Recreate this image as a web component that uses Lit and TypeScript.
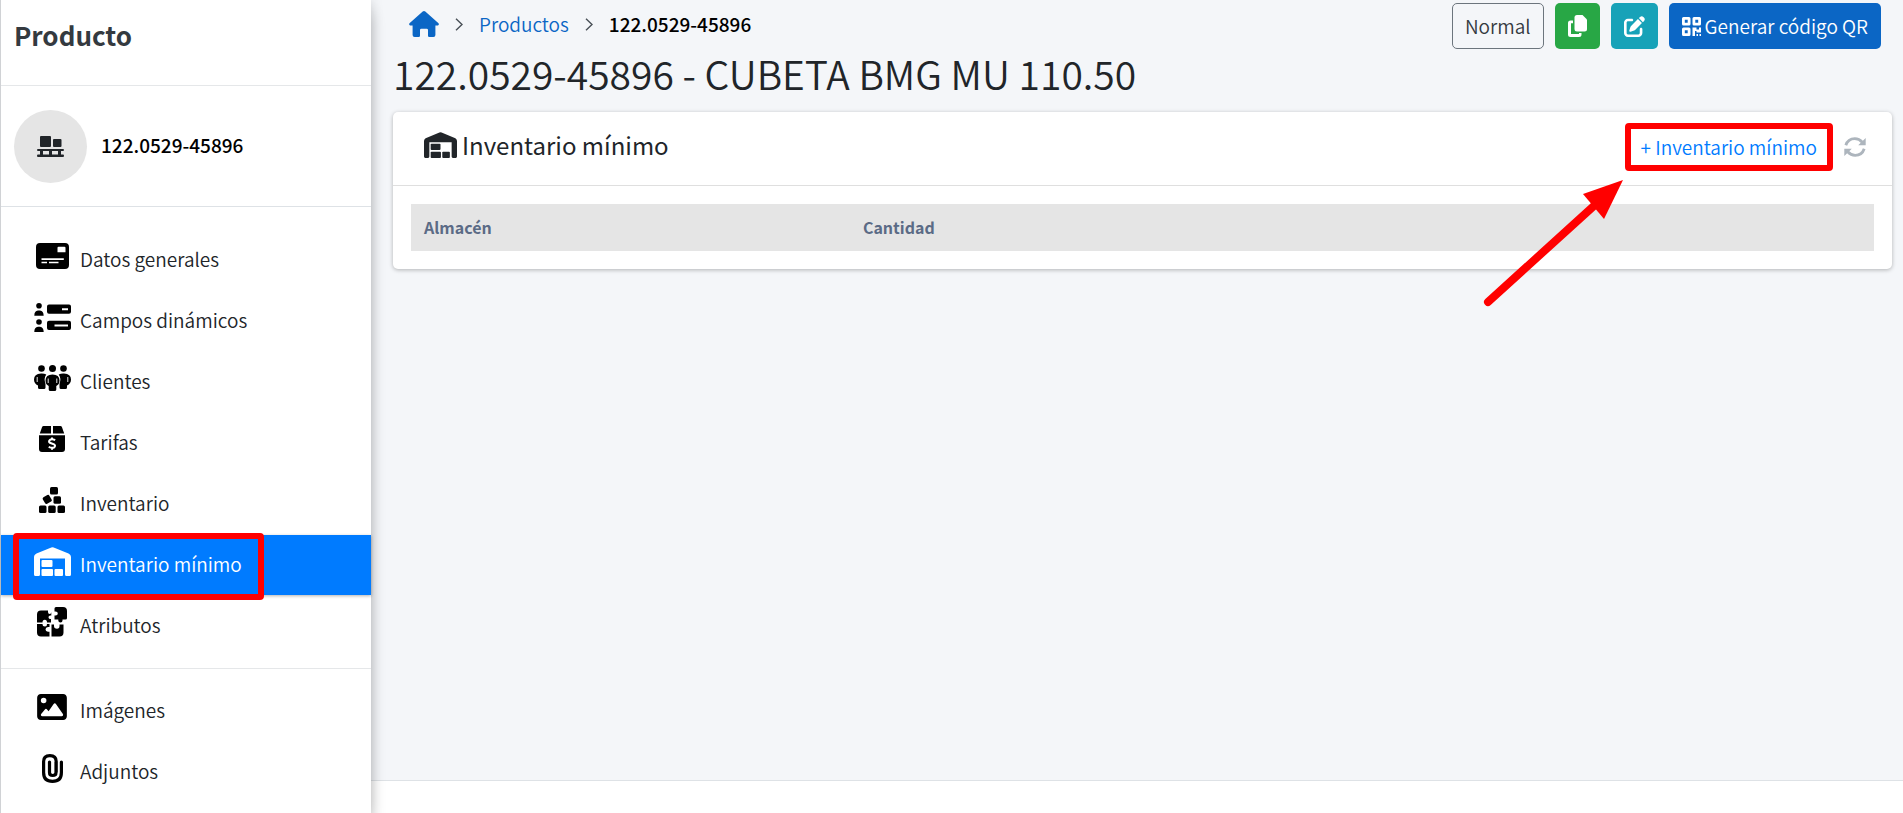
import { LitElement, html, css, svg } from "lit";
import { customElement, property } from "lit/decorators.js";

const R = (x: number, y: number, w: number, h: number, r = 1) =>
  svg`<rect x=${x} y=${y} width=${w} height=${h} rx=${r} />`;

const warehouse = {
  w: 37,
  h: 29,
  body: svg`
    <path fill-rule="evenodd" d="M0 27.500V10.500C0 8.600 1 7.300 2.500 6.600L17.300.5Q18.500 0 19.700.5L34.500 6.600C36 7.300 37 8.600 37 10.500V27.500Q37 29 35.500 29H32.500Q31 29 31 27.500V11.500H6V27.500Q6 29 4.500 29H1.500Q0 29 0 27.500Z"/>
    ${R(7.5, 13, 11, 7)}${R(7.5, 22, 11.5, 7)}${R(20.5, 22, 8.5, 7)}`,
};

const ICONS: Record<string, { w: number; h: number; body: unknown }> = {
  warehouse,
  home: {
    w: 30,
    h: 26,
    body: svg`<path d="M15 0Q15.700 0 16.300.5L29.500 12.200Q30.300 13.300 29.300 14.200Q28.900 14.600 28 14.600H26.400V24Q26.400 26 24.400 26H20.300Q19 26 19 24.700V19Q19 17.700 17.700 17.700H12.300Q11 17.700 11 19V24.700Q11 26 9.700 26H5.600Q3.600 26 3.600 24V14.600H2Q1.100 14.600.7 14.200Q-.3 13.300.5 12.200L13.700.5Q14.300 0 15 0Z"/>`,
  },
  pallet: {
    w: 27,
    h: 21,
    body: svg`${R(3, 0, 11, 11)}${R(16, 3, 8.5, 8)}
      <path d="M1 13H26Q27 13 27 14Q27 15 26 15H24V18.500H26Q27 18.500 27 19.700Q27 21 26 21H1Q0 21 0 19.700Q0 18.500 1 18.500H3V15H1Q0 15 0 14Q0 13 1 13ZM6 15V18.500H12V15ZM15 15V18.500H21V15Z"/>`,
  },
  card: {
    w: 33,
    h: 26,
    body: svg`<path fill-rule="evenodd" d="M4 0H29Q33 0 33 4V22Q33 26 29 26H4Q0 26 0 22V4Q0 0 4 0ZM22.500 3.800Q21.500 3.800 21.500 4.800V9.200H29.500V4.800Q29.500 3.800 28.500 3.800ZM5.500 15.200V17H27.800V15.200ZM5.500 18.800V20.300H11V18.800ZM13 18.800V20.300H22.500V18.800Z"/>`,
  },
  fields: {
    w: 37,
    h: 29,
    body: svg`<circle cx="5" cy="2.800" r="2.800"/><path d="M.3 12.800Q.3 8 4 7.600H6Q9.500 8 9.700 12.800Z"/>
      <circle cx="5" cy="19" r="2.800"/><path d="M.3 29Q.3 24.200 4 23.800H6Q9.500 24.200 9.700 29Z"/>
      <path fill-rule="evenodd" d="M15 1.600H35Q37 1.600 37 3.600V8.800Q37 10.800 35 10.800H15Q13 10.800 13 8.800V3.600Q13 1.600 15 1.600ZM28 5.300V7.200H34V5.300ZM15 17.800H35Q37 17.800 37 19.800V25Q37 27 35 27H15Q13 27 13 25V19.800Q13 17.800 15 17.800ZM20.500 21.500V23.400H34V21.500Z"/>`,
  },
  people: {
    w: 37,
    h: 26,
    body: svg`<circle cx="7.500" cy="3.500" r="3.300"/><circle cx="29.500" cy="3.500" r="3.300"/><circle cx="18.500" cy="3.500" r="3.500"/>
      <path d="M7 8.500Q10 8.300 12.300 9.500Q9.500 13 11.500 19V22.500Q11.500 24 10 24H5.500Q4 24 4 22.500V20.500Q0 18.500 0 14.500Q0 9 7 8.500Z"/>
      <path d="M30 8.500Q27 8.300 24.700 9.500Q27.500 13 25.500 19V22.500Q25.500 24 27 24H31.500Q33 24 33 22.500V20.500Q37 18.500 37 14.500Q37 9 30 8.500Z"/>
      <path d="M18.500 9.500Q25.500 9.500 25.500 15.500Q25.500 19.500 22.300 21V24.500Q22.300 26 20.500 26H16.500Q14.700 26 14.700 24.500V21Q11.500 19.500 11.500 15.500Q11.500 9.500 18.500 9.500Z"/>
      <path d="M3.200 12V17M33.800 12V17M14.200 13.500V18M22.800 13.500V18" stroke="#fff" stroke-width=".9"/>`,
  },
  price: {
    w: 26,
    h: 26,
    body: svg`<path d="M4.500 0H12V7.500H.8L3 1.200Q3.500 0 4.500 0ZM14 0H21.500Q22.500 0 23 1.200L25.200 7.500H14ZM0 9.200H26V23Q26 26 23 26H3Q0 26 0 23Z"/>
      <path d="M16.200 14.200Q13 12.600 10.900 13.900Q9.200 15.400 10.900 16.800L15 18.300Q16.900 19.600 15.300 21.300Q13.200 22.600 9.700 20.900M13 11.500V13.500M13 21.700V23.700" fill="none" stroke="#fff" stroke-width="2"/>`,
  },
  boxes: {
    w: 26,
    h: 26,
    body: svg`${R(11, 0, 8, 7.5, 1.5)}${R(0, 18.5, 7.5, 7.5, 1.5)}${R(9.2, 18.5, 7.5, 7.5, 1.5)}${R(18.5, 18.5, 7.5, 7.5, 1.5)}${R(14.5, 9.3, 7.5, 7.5, 1.5)}
      <rect x="4.500" y="8.700" width="7.500" height="7.500" rx="1.500" transform="rotate(-30 8.250 12.450)"/>`,
  },
  puzzle: {
    w: 30,
    h: 30,
    body: svg`<path d="M4 3.500H11V5Q11 7 12.700 7Q14.300 7 14.300 5V8.500H13Q11.300 9 11.500 10.500Q11.700 12 13.500 12H14V15.500H10Q10 12.700 7.800 12.700Q5.500 12.700 5.500 15.500H0V7.500Q0 3.500 4 3.500Z"/>
      <path d="M17.500 1.500Q17.500 0 19 0H26Q30 0 30 4V11Q30 12.500 28.500 12.500H25.500V13.500Q25.500 15.500 23.500 15.500Q21.300 15.500 21.300 13.500V12.500H17.500V8.500H18.500Q20.800 8.500 20.800 6.500Q20.800 4.500 18.500 4.500H17.500Z"/>
      <path d="M0 17H5.500Q5.500 19.500 8 19.500Q10.200 19.500 10 17H12.500V20H11Q8.500 20.300 8.500 22.500Q8.500 24.500 11 24.700H12.500V29.500H4Q0 29.500 0 25.500Z"/>
      <path d="M14.500 17.500H17V19Q17 21.700 20 21.700Q22.500 21.700 22.500 19V17.500H26.500V25.500Q26.500 29.500 22.500 29.500H14.500Z"/>`,
  },
  image: {
    w: 512,
    h: 448,
    body: svg`<path transform="translate(0 -32)" d="M0 96C0 60.700 28.700 32 64 32H448c35.300 0 64 28.700 64 64V416c0 35.300-28.700 64-64 64H64c-35.300 0-64-28.700-64-64V96zM323.800 202.500c-4.500-6.600-11.900-10.500-19.800-10.500s-15.400 3.900-19.800 10.500l-87 127.600L170.700 297c-4.600-5.700-11.500-9-18.700-9s-14.200 3.300-18.700 9l-64 80c-5.800 7.200-6.900 17.100-2.900 25.400s12.400 13.600 21.600 13.600h96 32H424c8.900 0 17.100-4.900 21.200-12.800s3.600-17.400-1.400-24.700l-120-176zM112 192a48 48 0 1 0 0-96 48 48 0 1 0 0 96z"/>`,
  },
  clip: {
    w: 21,
    h: 29,
    body: svg`<path d="M14 8V18.500Q14 21.500 10.700 21.500Q7.500 21.500 7.500 18.500V8M14.200 18V7.500Q14.200 1.600 7.900 1.600Q1.600 1.600 1.600 7.500V18.500Q1.600 27.400 10.500 27.400Q19.400 27.400 19.400 18.500V8" fill="none" stroke="currentColor" stroke-width="3.200" stroke-linecap="round"/>`,
  },
  copy: {
    w: 19,
    h: 22,
    body: svg`<path d="M9 0H14.500L19 4.500V14Q19 16.500 16.500 16.500H9Q6.500 16.500 6.500 14V2.500Q6.500 0 9 0Z"/>
      <path d="M2.500 5.500H5V8.300H3V19H11V18H13.500V19.500Q13.500 22 11 22H2.500Q0 22 0 19.500V8Q0 5.500 2.500 5.500Z"/>`,
  },
  edit: {
    w: 512,
    h: 512,
    body: svg`<path d="M471.600 21.700c-21.900-21.900-57.300-21.900-79.200 0L362.300 51.700l97.900 97.900 30.100-30.100c21.900-21.900 21.900-57.300 0-79.200L471.600 21.700zm-299.200 220c-6.100 6.100-10.800 13.600-13.500 21.900l-29.600 88.800c-2.900 8.600-.6 18.100 5.800 24.600s15.900 8.700 24.600 5.800l88.800-29.600c8.200-2.700 15.700-7.400 21.900-13.500L437.700 172.300 339.700 74.300 172.400 241.700zM96 64C43 64 0 107 0 160V416c0 53 43 96 96 96H352c53 0 96-43 96-96V320c0-17.700-14.300-32-32-32s-32 14.300-32 32v96c0 17.700-14.300 32-32 32H96c-17.700 0-32-14.300-32-32V160c0-17.700 14.300-32 32-32h96c17.700 0 32-14.300 32-32s-14.300-32-32-32H96z"/>`,
  },
  qr: {
    w: 19,
    h: 19,
    body: svg`<path fill-rule="evenodd" d="M1.500 0H7Q8.500 0 8.500 1.500V7Q8.500 8.500 7 8.500H1.500Q0 8.500 0 7V1.500Q0 0 1.500 0ZM2.800 2.800V5.700H5.700V2.800ZM12 0H17.500Q19 0 19 1.500V7Q19 8.500 17.500 8.500H12Q10.500 8.500 10.500 7V1.500Q10.500 0 12 0ZM13.300 2.800V5.700H16.200V2.800ZM1.500 10.500H7Q8.500 10.500 8.500 12V17.500Q8.500 19 7 19H1.500Q0 19 0 17.500V12Q0 10.500 1.500 10.500ZM2.800 13.300V16.200H5.700V13.300ZM10.500 10.500H14.500V12.500H17V10.500H19V15.500H14.500V14H13V19H10.500ZM14.500 17H16V19H14.500ZM17.500 17H19V19H17.500Z"/>`,
  },
  sync: {
    w: 22,
    h: 20,
    body: svg`<path d="M1.800 8.300Q4 1.700 10.800 1.700Q15.200 1.700 18.300 5.200M20.200 11.700Q18 18.300 11.200 18.300Q6.800 18.300 3.700 14.800" fill="none" stroke="currentColor" stroke-width="2.800"/>
      <path d="M21.700 1V8.300H14.200ZM.3 19V11.700H7.800Z"/>`,
  },
  chevron: {
    w: 8,
    h: 13,
    body: svg`<path d="M1 .8L7 6.500L1 12.200" fill="none" stroke="#495057" stroke-width="1.400"/>`,
  },
};

@customElement("ui-icon")
export class UiIcon extends LitElement {
  @property() name = "";
  static styles = css`
    :host {
      display: inline-flex;
      flex: none;
    }
    svg {
      display: block;
      width: 100%;
      height: 100%;
      fill: currentColor;
    }
  `;
  render() {
    const i = ICONS[this.name];
    return i ? html`<svg viewBox="0 0 ${i.w} ${i.h}" aria-hidden="true">${i.body}</svg>` : null;
  }
}

const MENU = [
  [
    { label: "Datos generales", icon: "card" },
    { label: "Campos dinámicos", icon: "fields" },
    { label: "Clientes", icon: "people" },
    { label: "Tarifas", icon: "price" },
    { label: "Inventario", icon: "boxes" },
    { label: "Inventario mínimo", icon: "warehouse", active: true },
    { label: "Atributos", icon: "puzzle" },
  ],
  [
    { label: "Imágenes", icon: "image" },
    { label: "Adjuntos", icon: "clip" },
  ],
] as { label: string; icon: string; active?: boolean }[][];

@customElement("app-root")
export class AppRoot extends LitElement {
  static styles = css`
    :host {
      display: grid;
      grid-template-columns: 371px minmax(0, 1fr);
      grid-template-rows: minmax(0, 1fr);
      height: 100vh;
      overflow: hidden;
      background: #f4f6f9;
      color: #212529;
      font: 350 19px/28px "Noto Sans CJK SC", "Noto Sans", sans-serif;
    }
    * {
      box-sizing: border-box;
    }
    a {
      color: inherit;
      text-decoration: none;
    }
    .sidebar {
      position: relative;
      z-index: 1;
      background: #fff;
      border-left: 1px solid #d0d2d5;
      box-shadow: 0 14px 14px rgba(0, 0, 0, 0.2), 0 0 12px rgba(0, 0, 0, 0.15);
    }
    .brand {
      margin: 0;
      padding: 19px 13px 34px;
      border-bottom: 1px solid #e5e7e9;
      font-size: 26px;
      line-height: 32px;
      font-weight: 700;
      color: #343a40;
    }
    .product {
      display: flex;
      align-items: center;
      gap: 14px;
      padding: 24px 13px 23px;
      border-bottom: 1px solid #dee2e6;
      color: #000;
      font-weight: 500;
    }
    .product-code { padding-bottom: 3px; }
    .avatar {
      display: grid;
      place-items: center;
      width: 73px;
      height: 73px;
      border-radius: 50%;
      background: #e5e5e5;
      color: #212529;
    }
    .i-pallet { width: 27px; height: 21px; }
    .menu {
      display: grid;
      gap: 1px;
      margin: 0;
      padding: 23px 0 12px;
      list-style: none;
    }
    .menu + .menu {
      border-top: 1px solid #e5e7e9;
      padding: 12px 0 0;
    }
    .item {
      position: relative;
      display: flex;
      align-items: center;
      gap: 9px;
      height: 60px;
      padding-left: 32px;
      color: #212529;
    }
    .item.active {
      background: #007bff;
      color: #fff;
      box-shadow: 0 1px 3px rgba(0, 0, 0, 0.3);
    }
    .glyph {
      display: grid;
      place-items: center;
      width: 38px;
      padding-bottom: 8px;
      color: #000;
    }
    .label { padding-bottom: 2px; }
    .active .glyph { color: #fff; }
    .i-card { width: 33px; height: 26px; }
    .i-fields, .i-warehouse { width: 37px; height: 29px; }
    .i-people { width: 37px; height: 26px; }
    .i-price, .i-boxes { width: 26px; height: 26px; }
    .i-puzzle { width: 30px; height: 30px; }
    .i-image { width: 30px; height: 26px; }
    .i-clip { width: 21px; height: 29px; }
    .mark {
      position: absolute;
      border: 6px solid #f00;
      border-radius: 4px;
      pointer-events: none;
    }
    .mark-item {
      left: 12px;
      top: -2px;
      bottom: -5px;
      width: 251px;
    }
    .main {
      display: flex;
      flex-direction: column;
      min-width: 0;
    }
    .content {
      flex: 1;
      padding: 3px 11px 0 22px;
    }
    .top {
      display: flex;
      justify-content: space-between;
      padding: 0 11px 0 16px;
    }
    .crumbs {
      display: flex;
      align-items: center;
      gap: 16px;
      height: 42px;
    }
    .crumbs a { display: flex; color: #0b66c5; }
    .current { color: #000; font-weight: 500; }
    .i-home { width: 30px; height: 26px; color: #0b66c5; }
    .i-chevron { width: 8px; height: 13px; }
    .actions {
      display: flex;
      gap: 11px;
    }
    .btn {
      display: flex;
      align-items: center;
      gap: 4px;
      height: 46px;
      padding: 0 12px;
      border: 1px solid transparent;
      border-radius: 5px;
      font: inherit;
      color: #fff;
    }
    .outline { background: transparent; border-color: #6c757d; color: #343a40; }
    .green { background: #28a745; }
    .teal { background: #17a2b8; }
    .blue { background: #0b66c5; }
    .i-copy { width: 19px; height: 22px; }
    .i-edit { width: 21px; height: 21px; }
    .i-qr { width: 19px; height: 19px; }
    h1 {
      margin: 0 0 14px;
      font-size: 39px;
      line-height: 49px;
      font-weight: 350;
    }
    .card {
      background: #fff;
      border-radius: 5px;
      box-shadow: 0 1px 4px rgba(0, 0, 0, 0.28);
    }
    .card-head {
      display: flex;
      align-items: center;
      justify-content: space-between;
      height: 74px;
      padding: 0 26px 3px 31px;
      border-bottom: 1px solid #dfdfdf;
    }
    .card-title {
      display: flex;
      align-items: center;
      gap: 5px;
      margin: 0 0 4px;
      font-size: 24px;
      font-weight: 400;
    }
    .i-head { width: 33px; height: 26px; }
    .tools {
      display: flex;
      align-items: center;
      gap: 11px;
    }
    .add {
      position: relative;
      padding: 10px 16px;
      color: #007bff;
    }
    .mark-add { inset: 0; }
    .arrow {
      position: absolute;
      right: 209px;
      top: 57px;
      width: 142px;
      height: 128px;
      pointer-events: none;
    }
    .refresh {
      display: flex;
      padding: 0;
      border: 0;
      background: none;
      color: #adb5bd;
    }
    .i-sync { width: 22px; height: 20px; }
    .card-body { padding: 18px; }
    table {
      width: 100%;
      border-collapse: collapse;
      table-layout: fixed;
    }
    th {
      padding: 9px 13px 10px;
      background: #e5e5e5;
      color: #5b6b86;
      font-size: 16px;
      font-weight: 700;
      text-align: left;
    }
    .col-store { width: 30%; }
    .footer {
      height: 33px;
      background: #fff;
      border-top: 1px solid #dee2e6;
    }
  `;

  private icon(name: string, cls = name) {
    return html`<ui-icon class="i-${cls}" name=${name}></ui-icon>`;
  }

  render() {
    return html`
      <aside class="sidebar">
        <h2 class="brand">Producto</h2>
        <div class="product">
          <span class="avatar">${this.icon("pallet")}</span>
          <span class="product-code">122.0529-45896</span>
        </div>
        <nav>
          ${MENU.map(
            (group) => html`<ul class="menu">
              ${group.map(
                (m) => html`<li>
                  <a class="item ${m.active ? "active" : ""}" href="#">
                    <span class="glyph">${this.icon(m.icon)}</span>
                    <span class="label">${m.label}</span>
                    ${m.active ? html`<span class="mark mark-item"></span>` : null}
                  </a>
                </li>`
              )}
            </ul>`
          )}
        </nav>
      </aside>
      <div class="main">
        <main class="content">
          <div class="top">
            <nav class="crumbs" aria-label="Ruta">
              <a href="#" aria-label="Inicio">${this.icon("home")}</a>
              ${this.icon("chevron")}
              <a href="#">Productos</a>
              ${this.icon("chevron")}
              <span class="current">122.0529-45896</span>
            </nav>
            <div class="actions">
              <button class="btn outline">Normal</button>
              <button class="btn green" aria-label="Copiar">${this.icon("copy")}</button>
              <button class="btn teal" aria-label="Editar">${this.icon("edit")}</button>
              <button class="btn blue">${this.icon("qr")}<span>Generar código QR</span></button>
            </div>
          </div>
          <h1>122.0529-45896 - CUBETA BMG MU 110.50</h1>
          <section class="card">
            <div class="card-head">
              <h3 class="card-title">${this.icon("warehouse", "head")}<span>Inventario mínimo</span></h3>
              <div class="tools">
                <a class="add" href="#">
                  + Inventario mínimo
                  <span class="mark mark-add"></span>
                  <svg class="arrow" viewBox="0 0 142 128" aria-hidden="true">
                    <path d="M6 122L114 24" stroke="#f00" stroke-width="8" stroke-linecap="round" />
                    <path d="M141 0L101 14L122 39Z" fill="#f00" />
                  </svg>
                </a>
                <button class="refresh" aria-label="Actualizar">${this.icon("sync")}</button>
              </div>
            </div>
            <div class="card-body">
              <table>
                <thead>
                  <tr>
                    <th class="col-store">Almacén</th>
                    <th>Cantidad</th>
                  </tr>
                </thead>
              </table>
            </div>
          </section>
        </main>
        <footer class="footer"></footer>
      </div>
    `;
  }
}
